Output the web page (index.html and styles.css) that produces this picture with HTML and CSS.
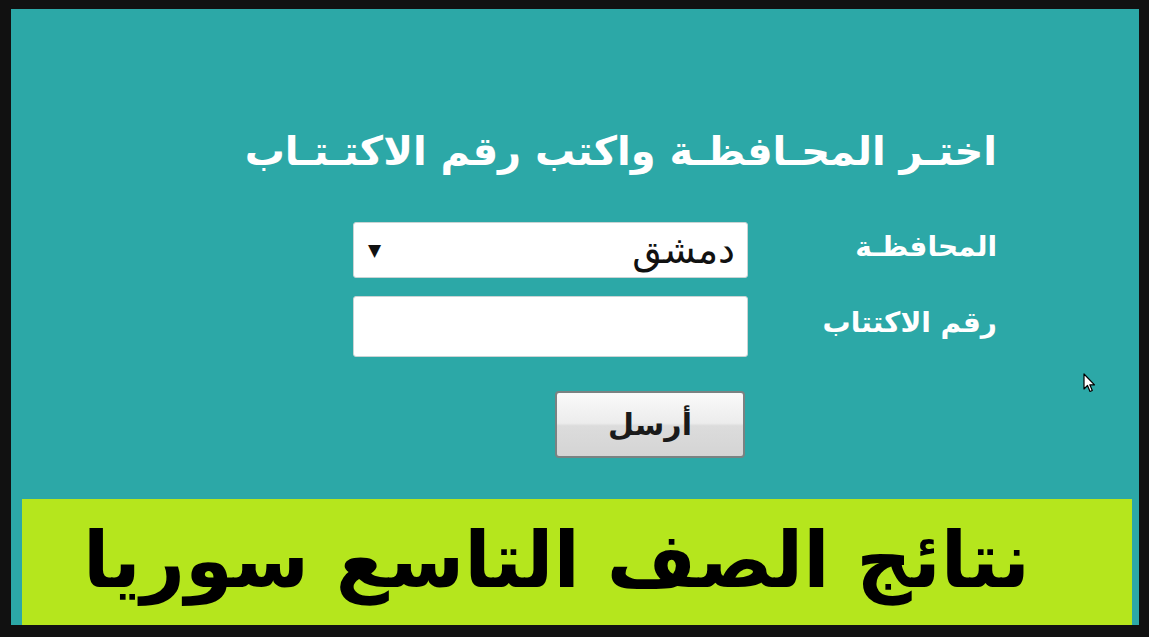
FILE: index.html
```html
<!DOCTYPE html>
<html lang="ar">
<head>
  <meta charset="UTF-8" />
  <meta name="viewport" content="width=device-width, initial-scale=1.0" />
  <title>نتائج الصف التاسع سوريا</title>
  <link rel="stylesheet" href="styles.css">
</head>
<body>
  <div class="frame">
    <!-- Results form -->
    <section class="form-section" dir="rtl">
      <h1>اختـر المحـافظـة واكتب رقم الاكتـتـاب</h1>
      <form class="result-form">
        <label for="gov">المحافظـة</label>
        <div class="select-box">
          <span class="select-value">دمشق</span>
          <span class="select-arrow">&#9660;</span>
        </div>

        <label for="seat">رقم الاكتتاب</label>
        <input type="text" id="seat" />

        <span></span>
        <button type="button" class="send-btn">أرسل</button>
      </form>
    </section>

    <!-- Banner -->
    <div class="banner" dir="rtl">
      <p>نتائج الصف التاسع سوريا</p>
    </div>

    <svg class="cursor" width="13" height="20" viewBox="0 0 13 20">
      <path d="M1 1 L1 16 L4.5 12.5 L7 18.5 L9.3 17.5 L6.8 11.8 L11.5 11.8 Z" fill="#fff" stroke="#000" stroke-width="1.2" stroke-linejoin="round"/>
    </svg>
  </div>
</body>
</html>
```

FILE: styles.css
```css
/* General Styles */
body {
  margin: 0;
  padding: 0;
  background-color: #111111;
  font-family: "DejaVu Sans", sans-serif;
  overflow: hidden;
}

.frame {
  position: relative;
  margin: 9px 10px 0 11px;
  height: 616px;
  background-color: #2ca8a7;
  overflow: hidden;
}

/* Form Section */
.form-section {
  height: 490px;
  padding-right: 142px;
  box-sizing: border-box;
  padding-top: 112px;
}

.form-section h1 {
  margin: 0 0 41px 0;
  color: white;
  font-size: 40px;
  font-weight: bold;
  line-height: 60px;
}

.result-form {
  display: grid;
  grid-template-columns: 249px 395px;
  row-gap: 18px;
  align-items: center;
}

label {
  color: white;
  font-size: 28px;
  font-weight: bold;
  margin-bottom: 8px;
}

.select-box,
input {
  box-sizing: border-box;
  width: 395px;
  background: white;
  border: 1px solid #c9d4d4;
  border-radius: 3px;
}

.select-box {
  height: 56px;
  display: flex;
  align-items: center;
  justify-content: space-between;
  padding: 0 12px 0 14px;
}

.select-value {
  font-size: 38px;
  color: #111;
}

.select-arrow {
  font-size: 17px;
  color: #111;
}

input {
  height: 61px;
  margin: 0;
}

.send-btn {
  justify-self: start;
  margin: 16px 3px 0 0;
  width: 190px;
  height: 67px;
  border: 2px solid #7a8282;
  border-radius: 4px;
  background: linear-gradient(#fafafa 0%, #ececec 48%, #dcdcdc 52%, #d4d4d4 100%);
  font-family: "DejaVu Sans", sans-serif;
  font-size: 30px;
  font-weight: bold;
  color: #1a1a1a;
  cursor: pointer;
}

/* Banner */
.banner {
  margin: 0 7px 0 11px;
  height: 140px;
  background-color: #b5e61d;
}

.banner p {
  margin: 0;
  padding-right: 102px;
  font-size: 77px;
  font-weight: bold;
  line-height: 124px;
  color: black;
}

.cursor {
  position: absolute;
  left: 1072px;
  top: 364px;
}
```
